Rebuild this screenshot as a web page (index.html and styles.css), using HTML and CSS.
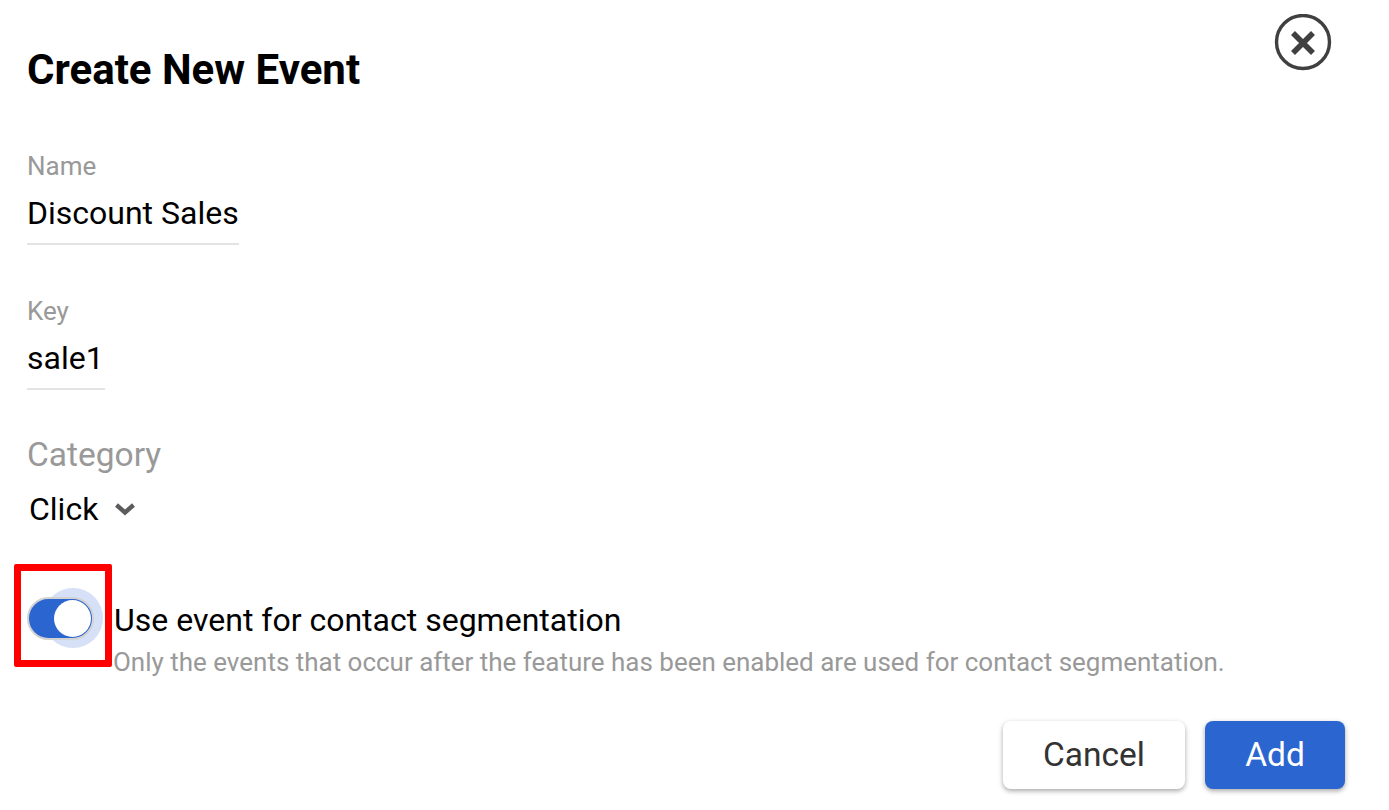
FILE: index.html
```html
<!DOCTYPE html>
<html>
<head>
    <title>Create New Event</title>
    <link rel="stylesheet" href="styles.css">
</head>
<body>
    <div class="dialog">
        <div class="dialog-header">
            <h2>Create New Event</h2>
            <button class="close-btn" type="button" aria-label="Close">
                <svg width="58" height="58" viewBox="0 0 58 58">
                    <circle cx="29" cy="28" r="26.5" fill="none" stroke="#404040" stroke-width="3.4"/>
                    <path d="M19 19L39 39M39 19L19 39" fill="none" stroke="#404040" stroke-width="5.6"/>
                </svg>
            </button>
        </div>

        <div class="field field-name">
            <div class="field-label">Name</div>
            <div class="field-value">Discount Sales</div>
        </div>

        <div class="field field-key">
            <div class="field-label">Key</div>
            <div class="field-value">sale1</div>
        </div>

        <div class="category">
            <div class="category-label">Category</div>
            <div class="category-select">
                <span>Click</span>
                <svg width="22" height="14" viewBox="0 0 22 14">
                    <path d="M2.5 3L11 10.5L19.500 3" fill="none" stroke="#5c5c5c" stroke-width="4.4"/>
                </svg>
            </div>
        </div>

        <div class="segmentation">
            <div class="toggle-wrap">
                <div class="toggle">
                    <div class="toggle-halo"></div>
                    <div class="toggle-track"></div>
                    <div class="toggle-thumb"></div>
                </div>
                <div class="highlight-box"></div>
            </div>
            <div class="segmentation-text">
                <div class="segmentation-title">Use event for contact segmentation</div>
                <div class="segmentation-hint">Only the events that occur after the feature has been enabled are used for contact segmentation.</div>
            </div>
        </div>

        <div class="actions">
            <button class="btn btn-cancel" type="button">Cancel</button>
            <button class="btn btn-add" type="button">Add</button>
        </div>
    </div>
</body>
</html>
```

FILE: styles.css
```css
* {
    box-sizing: border-box;
}

body {
    margin: 0;
    background-color: #ffffff;
    font-family: Roboto, "Liberation Sans", sans-serif;
    color: #000000;
}

.dialog {
    width: 1389px;
    height: 810px;
    padding: 14px 44px 0 27px;
    overflow: hidden;
}

.dialog-header {
    display: flex;
    justify-content: space-between;
    align-items: flex-start;
    height: 136px;
}

.dialog-header h2 {
    margin: 32px 0 0;
    font-size: 42px;
    line-height: 48px;
    font-weight: 700;
}

.close-btn {
    padding: 0;
    margin-right: 13px;
    width: 58px;
    height: 58px;
    border: none;
    background: none;
}

.field {
    width: fit-content;
    border-bottom: 2px solid #e3e3e3;
}

.field-key {
    margin-top: 50px;
    padding-right: 1px;
}

.field-label {
    font-size: 26px;
    line-height: 32px;
    color: #999999;
}

.field-value {
    font-size: 32px;
    line-height: 40px;
    padding: 11px 0 10px;
}

.category {
    margin-top: 45px;
}

.category-label {
    font-size: 33.5px;
    line-height: 40px;
    color: #999999;
}

.category-select {
    display: flex;
    align-items: center;
    gap: 16px;
    margin-top: 14px;
    padding-left: 2px;
    font-size: 32px;
    line-height: 40px;
}

.segmentation {
    display: flex;
    margin-top: 35px;
    margin-left: -14px;
}

.toggle-wrap {
    position: relative;
    width: 102px;
    height: 103px;
    flex-shrink: 0;
}

.toggle {
    position: absolute;
    top: 33px;
    left: 14px;
    width: 67px;
    height: 43px;
}

.toggle-halo {
    position: absolute;
    top: -9px;
    left: 16px;
    width: 60px;
    height: 60px;
    border-radius: 50%;
    background-color: #d6e0f6;
}

.toggle-track {
    position: absolute;
    top: 0;
    left: 0;
    width: 67px;
    height: 43px;
    border-radius: 22px;
    background-color: #2b66d0;
    border: 2px solid #d2d2d2;
}

.toggle-thumb {
    position: absolute;
    top: 3px;
    left: 27px;
    width: 37px;
    height: 37px;
    border-radius: 50%;
    background-color: #ffffff;
}

.highlight-box {
    position: absolute;
    top: 0;
    left: 1px;
    width: 98px;
    height: 103px;
    border: 7px solid #ff0000;
    border-radius: 2px;
}

.segmentation-text {
    padding-top: 36px;
    margin-left: -1px;
}

.segmentation-title {
    font-size: 32px;
    line-height: 40px;
}

.segmentation-hint {
    margin-top: 6px;
    margin-left: -1px;
    font-size: 25.97px;
    line-height: 32px;
    color: #999999;
}

.actions {
    display: flex;
    justify-content: flex-end;
    gap: 20px;
    margin-top: 43px;
}

.btn {
    height: 68px;
    border: none;
    border-radius: 8px;
    font-family: inherit;
    font-size: 33.5px;
    padding-bottom: 3px;
    box-shadow: 0 2px 5px rgba(0, 0, 0, 0.35);
}

.btn-cancel {
    width: 182px;
    background-color: #ffffff;
    color: #333333;
}

.btn-add {
    width: 140px;
    background-color: #2b66d0;
    color: #ffffff;
}
```
